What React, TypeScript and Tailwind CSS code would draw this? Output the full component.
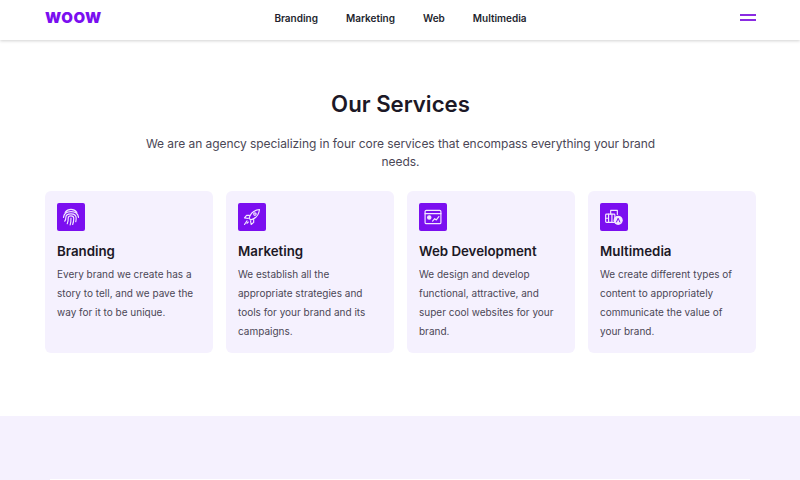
const font = { fontFamily: "Inter, 'Noto Sans', sans-serif" };

function Fingerprint() {
  return (
    <svg viewBox="0 0 24 24" className="w-5 h-5" fill="none" stroke="#f3e8ff" strokeWidth="1.4" strokeLinecap="round">
      <path d="M5 6.500C6.800 4 9.200 2.800 12 2.800s5.200 1.200 7 3.700" />
      <path d="M3 12.500C3.500 8 7.200 5.500 12 5.500s8.500 2.500 9 7" />
      <path d="M4.500 17c1-1.500 1.300-3 1.300-4.500C5.800 9.800 8.500 8.200 12 8.200s6.200 1.800 6.200 5c0 1.500-.1 3-.5 4.500" />
      <path d="M7.500 20c1-2 1.200-4.500 1.200-7 0-1.500 1.500-2.300 3.300-2.300s3.300 1 3.300 2.800c0 2.500-.3 5-1.300 7.500" />
      <path d="M11 21.500c.8-2.500 1-5.500 1-8.300" />
    </svg>
  );
}

function Rocket() {
  return (
    <svg viewBox="0 0 24 24" className="w-5 h-5" fill="none" stroke="#f3e8ff" strokeWidth="1.4" strokeLinecap="round" strokeLinejoin="round">
      <path d="M8.500 13.500C10 8 14.500 3.800 21 3c-.8 6.500-5 11-10.500 12.500z" />
      <path d="M9 10H5.500L3 13l4.500.8" />
      <path d="M14 15v3.500L11 21l-.8-4.500" />
      <circle cx="15.500" cy="8.500" r="1.500" />
      <path d="M6 16.500 3 21M7.500 18l-1.500 1.500" />
    </svg>
  );
}

function WebIcon() {
  return (
    <svg viewBox="0 0 24 24" className="w-5 h-5" fill="none" stroke="#f3e8ff" strokeWidth="1.4" strokeLinecap="round" strokeLinejoin="round">
      <rect x="2.500" y="4" width="19" height="16" rx="1.500" />
      <path d="M2.500 8h19" />
      <circle cx="7.500" cy="12.500" r="2" fill="#f3e8ff" />
      <path d="M11.500 17l2.500-3 2 1.500 3-4" />
    </svg>
  );
}

function MediaIcon() {
  return (
    <svg viewBox="0 0 24 24" className="w-5 h-5" fill="none" stroke="#f3e8ff" strokeWidth="1.4" strokeLinecap="round" strokeLinejoin="round">
      <rect x="2" y="8.500" width="11" height="10" rx="1" />
      <path d="M5.500 8.500v10M2 13.500h3.500M9.500 8.500v10" />
      <path d="M8 8.500V4h8v5" />
      <circle cx="17" cy="16" r="5.500" fill="#f3e8ff" stroke="none" />
      <path d="M15 18l2-4.500 2 4.500" stroke="#7b0ff0" strokeWidth="1.200" />
    </svg>
  );
}

const services = [
  {
    title: "Branding",
    text: "Every brand we create has a story to tell, and we pave the way for it to be unique.",
    icon: <Fingerprint />,
  },
  {
    title: "Marketing",
    text: "We establish all the appropriate strategies and tools for your brand and its campaigns.",
    icon: <Rocket />,
  },
  {
    title: "Web Development",
    text: "We design and develop functional, attractive, and super cool websites for your brand.",
    icon: <WebIcon />,
  },
  {
    title: "Multimedia",
    text: "We create different types of content to appropriately communicate the value of your brand.",
    icon: <MediaIcon />,
  },
];

export default function App() {
  return (
    <div className="w-[800px] h-[480px] overflow-hidden bg-white" style={font}>
      {/* header */}
      <header className="h-10 pl-[45px] pr-[44px] pb-[5px] grid grid-cols-[1fr_auto_1fr] items-center bg-white shadow-[0_1px_3px_rgba(0,0,0,0.18)]">
        <span className="text-[#7b0ff0] text-[15px] leading-5 font-black tracking-[0.6px]">WOOW</span>
        <nav className="flex gap-[28px] text-[10px] leading-5 font-semibold text-[#231f2e]">
          <span>Branding</span>
          <span>Marketing</span>
          <span>Web</span>
          <span>Multimedia</span>
        </nav>
        <div className="justify-self-end flex flex-col gap-[3px]">
          <span className="block w-4 h-[2px] bg-[#8a2be2]" />
          <span className="block w-4 h-[2px] bg-[#8a2be2]" />
        </div>
      </header>

      <section className="pl-[45px] pr-[44px] pt-[49px] h-[376px]">
        <h1 className="text-center text-[22.200px] leading-[30px] font-semibold text-[#1c1826]">Our Services</h1>
        <p className="mt-4 mx-auto w-[530px] text-center text-[12px] leading-[18px] tracking-[-0.06px] text-[#4b4756]">
          We are an agency specializing in four core services that encompass everything your brand needs.
        </p>
        <div className="mt-5 grid grid-cols-4 gap-[13px]">
          {services.map((s) => (
            <div key={s.title} className="h-[162px] rounded-[6px] bg-[#f5f1fe] px-3 pt-3">
              <div className="w-7 h-7 rounded-[2px] bg-[#7b0ff0] flex items-center justify-center">{s.icon}</div>
              <h3 className="mt-[11px] text-[13.300px] leading-[18px] font-semibold text-[#1c1826]">{s.title}</h3>
              <p className="mt-[5px] text-[10px] leading-[19px] text-[#4b4756]">{s.text}</p>
            </div>
          ))}
        </div>
      </section>

      <section className="h-[64px] bg-[#f5f1fe] pt-[63px] px-[50px]">
        <div className="h-px bg-white" />
      </section>
    </div>
  );
}
